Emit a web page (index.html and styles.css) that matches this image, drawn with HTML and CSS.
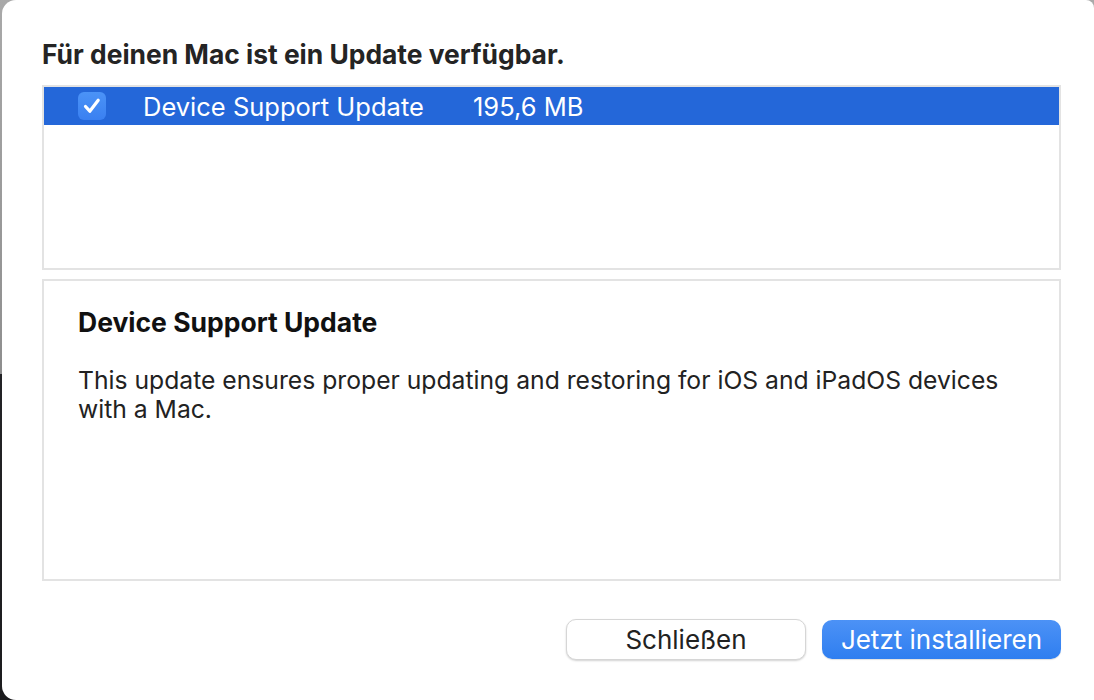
FILE: index.html
```html
<!DOCTYPE html>
<html lang="de">
<head>
    <meta charset="UTF-8">
    <title>Softwareupdate</title>
    <link rel="stylesheet" href="styles.css">
</head>
<body>
    <div class="window">
        <h1 class="headline">Für deinen Mac ist ein Update verfügbar.</h1>

        <div class="update-list">
            <div class="update-row selected">
                <span class="check">
                    <svg class="check-mark" viewBox="0 0 20 20">
                        <path d="M3.5 10.5 L7.8 15.2 L16.2 4.2" fill="none" stroke="#fff" stroke-width="3.2" stroke-linecap="round" stroke-linejoin="round"/>
                    </svg>
                </span>
                <span class="update-name">Device Support Update</span>
                <span class="update-size">195,6 MB</span>
            </div>
        </div>

        <div class="details">
            <h2 class="details-title">Device Support Update</h2>
            <p class="details-text">This update ensures proper updating and restoring for iOS and iPadOS devices with a Mac.</p>
        </div>

        <div class="actions">
            <button class="btn">Schließen</button>
            <button class="btn primary">Jetzt installieren</button>
        </div>
    </div>
</body>
</html>
```

FILE: styles.css
```css
* {
    margin: 0;
    padding: 0;
    box-sizing: border-box;
}

html, body {
    height: 100%;
}

body {
    background: linear-gradient(to bottom, #a9a9a9 0, #8e8e8e 374px, #232326 374px, #1c1c1e 100%);
    font-family: Inter, "Liberation Sans", sans-serif;
    color: #222;
    overflow: hidden;
}

.window {
    margin-left: 2px;
    height: 700px;
    background: #fff;
    border-radius: 14px 8px 0 14px;
    padding: 40px 33px 0 40px;
    display: flex;
    flex-direction: column;
}

.headline {
    font-size: 26.4px;
    font-weight: 700;
    color: #242424;
    line-height: 28px;
    margin-bottom: 17px;
}

.update-list {
    height: 185px;
    border: 2px solid #e3e3e3;
    background: #fff;
}

.update-row {
    height: 38px;
    display: flex;
    align-items: center;
    padding-left: 34px;
    font-size: 25.5px;
    color: #fff;
}

.update-row.selected {
    background: #2467d9;
}

.check {
    flex: none;
    width: 28px;
    height: 28px;
    border-radius: 6px;
    background: linear-gradient(to bottom, #4b93f7, #3a80f1);
    display: flex;
    align-items: center;
    justify-content: center;
}

.check-mark {
    width: 20px;
    height: 20px;
}

.update-name {
    margin-left: 37px;
    width: 330px;
}

.details {
    margin-top: 9px;
    height: 302px;
    border: 2px solid #e3e3e3;
    padding: 26px 34px;
}

.details-title {
    font-size: 26.5px;
    font-weight: 700;
    color: #111;
    line-height: 30px;
    margin-bottom: 29px;
}

.details-text {
    font-size: 24.7px;
    line-height: 29px;
    color: #222;
    max-width: 950px;
}

.actions {
    margin-top: 38px;
    display: flex;
    justify-content: flex-end;
    gap: 16px;
}

.btn {
    width: 240px;
    height: 41px;
    border-radius: 10px;
    font-family: inherit;
    font-size: 26px;
    color: #222;
    background: #fff;
    border: 1px solid #d6d6d6;
    box-shadow: 0 1px 2px rgba(0, 0, 0, 0.18);
}

.btn.primary {
    width: 239px;
    height: 39px;
    margin-top: 1px;
    border: none;
    color: #fff;
    background: linear-gradient(to bottom, #4c92f6, #2f7ef0);
    box-shadow: 0 1px 1px rgba(0, 0, 0, 0.12);
}
```
